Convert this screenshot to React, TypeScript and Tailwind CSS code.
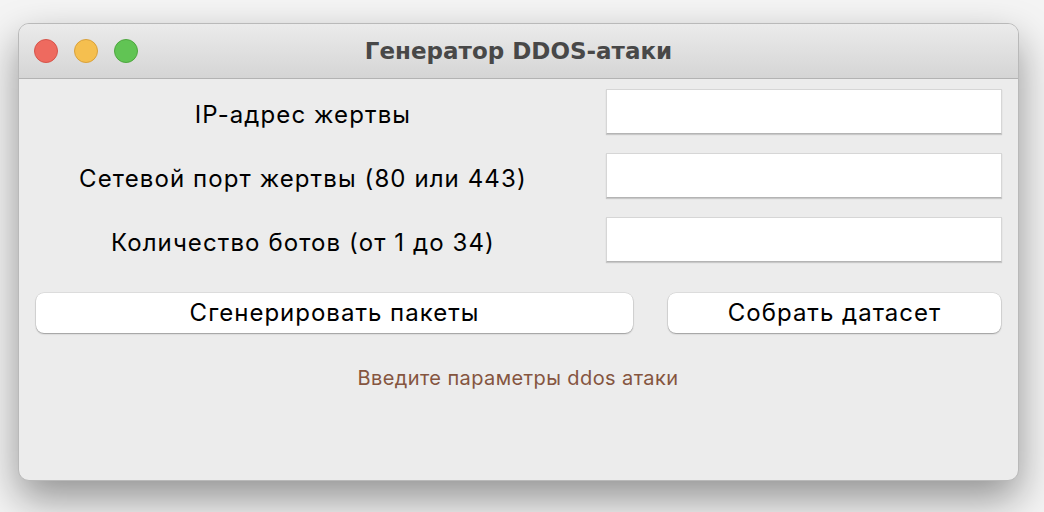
import React from "react";

const rows = [
  "IP-адрес жертвы",
  "Сетевой порт жертвы (80 или 443)",
  "Количество ботов (от 1 до 34)",
];

const App = () => {
  return (
    <div
      className="w-[1044px] h-[512px] bg-[#f4f4f4] pt-[23px] pl-[18px] overflow-hidden"
      style={{ fontFamily: 'Inter, "Liberation Sans", Arial, sans-serif' }}
    >
      {/* Window */}
      <div className="w-[1001px] h-[458px] rounded-[11px] bg-[#ececec] border border-[#b9b9b9] shadow-[0_18px_40px_rgba(0,0,0,0.4)] overflow-hidden flex flex-col">
        {/* Title bar */}
        <div className="relative h-[55px] shrink-0 bg-gradient-to-b from-[#ebebeb] to-[#d5d5d5] border-b border-[#b3b3b3] flex items-center justify-center">
          <div className="absolute left-[15px] top-[15px] flex gap-[16px]">
            <span className="w-[24px] h-[24px] rounded-full bg-[#ee6a5f] border border-[#d6544a]" />
            <span className="w-[24px] h-[24px] rounded-full bg-[#f5bf4f] border border-[#d9a13b]" />
            <span className="w-[24px] h-[24px] rounded-full bg-[#61c454] border border-[#4ea73f]" />
          </div>
          <span className="font-['DejaVu_Sans',sans-serif] text-[23px] font-bold text-[#484848]">Генератор DDOS-атаки</span>
        </div>

        {/* Body */}
        <div className="flex-1 pt-[10px] pl-[17px] pr-[16px]">
          <div className="flex flex-col gap-[20px]">
            {rows.map((label) => (
              <div key={label} className="flex items-center h-[44px]">
                <div className="w-[535px] pt-[8px] text-center text-[24px] tracking-[1.1px] text-black">{label}</div>
                <div className="ml-[36px] w-[397px] h-[45px] bg-white border border-[#d6d6d6] border-b-[#b4b4b4] shadow-[0_1px_1px_rgba(0,0,0,0.15)]" />
              </div>
            ))}
          </div>

          <div className="flex mt-[32px]">
            <button className="w-[597px] h-[40px] rounded-[8px] bg-white text-[24px] tracking-[1px] text-black shadow-[0_1px_1.5px_rgba(0,0,0,0.3),0_0_0_0.5px_rgba(0,0,0,0.12)]">
              Сгенерировать пакеты
            </button>
            <button className="ml-[35px] w-[333px] h-[40px] rounded-[8px] bg-white text-[24px] tracking-[1px] text-black shadow-[0_1px_1.5px_rgba(0,0,0,0.3),0_0_0_0.5px_rgba(0,0,0,0.12)]">
              Собрать датасет
            </button>
          </div>

          <div className="mt-[30px] text-center text-[20px] tracking-[0.4px] text-[#85553f] pr-[2px]">
            Введите параметры ddos атаки
          </div>
        </div>
      </div>
    </div>
  );
};

export default App;
